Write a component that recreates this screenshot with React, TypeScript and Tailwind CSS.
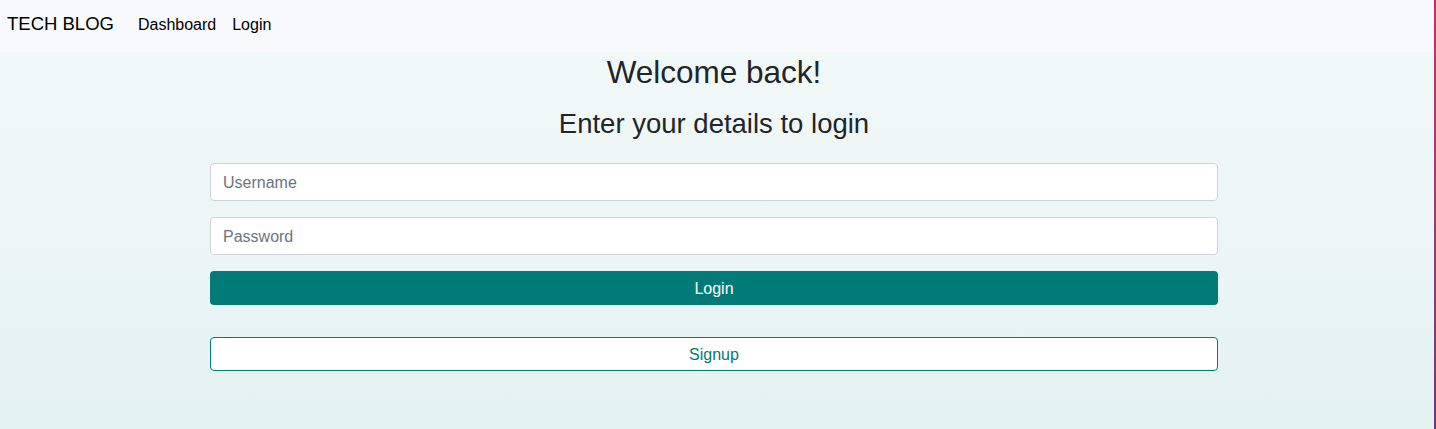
import React, { useState } from 'react';

const App: React.FC = () => {
  const [username, setUsername] = useState('');
  const [password, setPassword] = useState('');

  return (
    <div className="flex min-h-[429px] w-full font-['Liberation_Sans',Arial,sans-serif] text-[#212529]">
      <div className="flex flex-1 flex-col">
        <nav className="flex h-[52px] items-baseline bg-[#f8f9fa] pl-[7px] pt-[9px]">
          <span className="mr-[24px] text-[18.5px] leading-[30px] text-black">TECH BLOG</span>
          <a className="mr-[16px] text-[16px] leading-[24px] text-black">Dashboard</a>
          <a className="text-[16px] leading-[24px] text-black">Login</a>
        </nav>

        <main className="flex-1 bg-gradient-to-b from-[#f1f9f8] to-[#e5f2f2] pr-[6px] pt-[1px]">
          <div className="mx-auto w-[1008px]">
            <h2 className="text-center text-[31.5px] leading-[38px]">Welcome back!</h2>
            <h3 className="mt-[16px] text-center text-[27.5px] leading-[33px]">
              Enter your details to login
            </h3>

            <form className="mt-[23px] flex flex-col" onSubmit={(e) => e.preventDefault()}>
              <input
                type="text"
                value={username}
                onChange={(e) => setUsername(e.target.value)}
                placeholder="Username"
                className="h-[38px] w-full rounded-[4px] border border-[#ced4da] bg-white px-[12px] pt-[1px] text-[16px] outline-none placeholder:text-[#6c757d]"
              />
              <input
                type="password"
                value={password}
                onChange={(e) => setPassword(e.target.value)}
                placeholder="Password"
                className="mt-[16px] h-[38px] w-full rounded-[4px] border border-[#ced4da] bg-white px-[12px] pt-[1px] text-[16px] outline-none placeholder:text-[#6c757d]"
              />
              <button
                type="submit"
                className="mt-[16px] h-[34px] w-full rounded-[4px] bg-[#027a77] pt-[1px] text-[16px] text-white"
              >
                Login
              </button>
              <button
                type="button"
                className="mt-[32px] h-[34px] w-full rounded-[4px] border border-[#027a77] bg-white pt-[1px] text-[16px] text-[#027a77]"
              >
                Signup
              </button>
            </form>
          </div>
        </main>
      </div>
      <div className="w-[2px] bg-gradient-to-b from-[#dc1f63] to-[#6b3585]" />
    </div>
  );
};

export default App;
